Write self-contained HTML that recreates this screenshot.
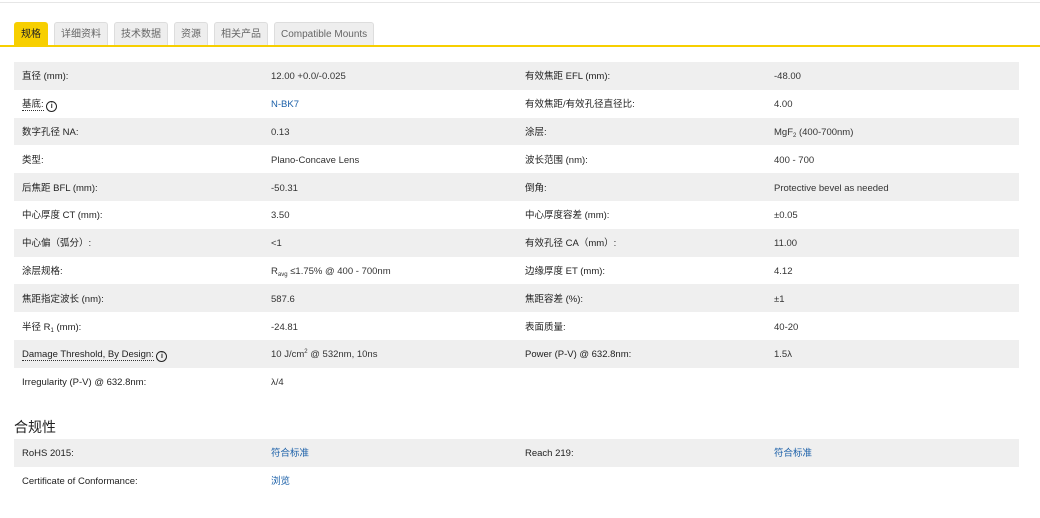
<!DOCTYPE html>
<html><head><meta charset="utf-8"><style>
body{margin:0;background:#fff;font-family:"Liberation Sans","Noto Sans CJK SC",sans-serif;font-size:9.5px;color:#333;width:1040px;height:518px;overflow:hidden;position:relative}
.top{position:absolute;left:0;right:0;top:2px;border-top:1px solid #e6e6e6}
.tabs{position:absolute;left:14px;top:22px;height:23px;display:flex;gap:6px}
.tab{height:22px;line-height:24px;padding:0 6px;background:#eee;border:1px solid #ddd;border-bottom:none;border-radius:3px 3px 0 0;color:#666;font-size:10px}
.tab.a{background:#f7cf00;border-color:#f7cf00;color:#222}
.yl{position:absolute;left:0;right:0;top:45px;height:2px;background:#f7cf00}
table{position:absolute;left:14px;width:1005px;border-collapse:collapse;table-layout:fixed}
td{height:27.8px;padding:3px 0 0 0;box-sizing:border-box;vertical-align:middle;line-height:12px}
tr:nth-child(odd) td{background:#efefef}
td.l{padding-left:8px;color:#222}
a{color:#1a5fa8;text-decoration:none}
.dot{border-bottom:1px dotted #333}
.i{display:inline-block;width:9px;height:9px;border:1.3px solid #222;border-radius:50%;font-size:7px;line-height:9px;text-align:center;font-weight:bold;vertical-align:-1px}
.sb{font-size:6px;position:relative;top:2px;line-height:0}
.sp{font-size:6px;position:relative;top:-4px;line-height:0}
h3{position:absolute;left:14px;top:417px;margin:0;font-size:14px;font-weight:normal;color:#222}
</style></head><body>
<div class="top"></div>
<div class="tabs"><div class="tab a">规格</div><div class="tab">详细资料</div><div class="tab">技术数据</div><div class="tab">资源</div><div class="tab">相关产品</div><div class="tab">Compatible Mounts</div></div>
<div class="yl"></div>
<table style="top:62px"><colgroup><col style="width:257px"><col style="width:246px"><col style="width:257px"><col></colgroup>
<tr><td class="l">直径 (mm):</td><td>12.00 +0.0/-0.025</td><td class="l">有效焦距 EFL (mm):</td><td>-48.00</td></tr>
<tr><td class="l"><span class="dot">基底:</span> <span class="i">i</span></td><td><a>N-BK7</a></td><td class="l">有效焦距/有效孔径直径比:</td><td>4.00</td></tr>
<tr><td class="l">数字孔径 NA:</td><td>0.13</td><td class="l">涂层:</td><td>MgF<span class="sb">2</span> (400-700nm)</td></tr>
<tr><td class="l">类型:</td><td>Plano-Concave Lens</td><td class="l">波长范围 (nm):</td><td>400 - 700</td></tr>
<tr><td class="l">后焦距 BFL (mm):</td><td>-50.31</td><td class="l">倒角:</td><td>Protective bevel as needed</td></tr>
<tr><td class="l">中心厚度 CT (mm):</td><td>3.50</td><td class="l">中心厚度容差 (mm):</td><td>±0.05</td></tr>
<tr><td class="l">中心偏（弧分）:</td><td>&lt;1</td><td class="l">有效孔径 CA（mm）:</td><td>11.00</td></tr>
<tr><td class="l">涂层规格:</td><td>R<span class="sb">avg</span> ≤1.75% @ 400 - 700nm</td><td class="l">边缘厚度 ET (mm):</td><td>4.12</td></tr>
<tr><td class="l">焦距指定波长 (nm):</td><td>587.6</td><td class="l">焦距容差 (%):</td><td>±1</td></tr>
<tr><td class="l">半径 R<span class="sb">1</span> (mm):</td><td>-24.81</td><td class="l">表面质量:</td><td>40-20</td></tr>
<tr><td class="l"><span class="dot">Damage Threshold, By Design:</span> <span class="i">i</span></td><td>10 J/cm<span class="sp">2</span> @ 532nm, 10ns</td><td class="l">Power (P-V) @ 632.8nm:</td><td>1.5λ</td></tr>
<tr><td class="l" style="background:#fff">Irregularity (P-V) @ 632.8nm:</td><td style="background:#fff">λ/4</td><td style="background:#fff"></td><td style="background:#fff"></td></tr>
</table>
<h3>合规性</h3>
<table style="top:439px"><colgroup><col style="width:257px"><col style="width:246px"><col style="width:257px"><col></colgroup>
<tr><td class="l">RoHS 2015:</td><td><a>符合标准</a></td><td class="l">Reach 219:</td><td><a>符合标准</a></td></tr>
<tr><td class="l" style="background:#fff">Certificate of Conformance:</td><td style="background:#fff"><a>浏览</a></td><td style="background:#fff"></td><td style="background:#fff"></td></tr>
</table>
</body></html>
